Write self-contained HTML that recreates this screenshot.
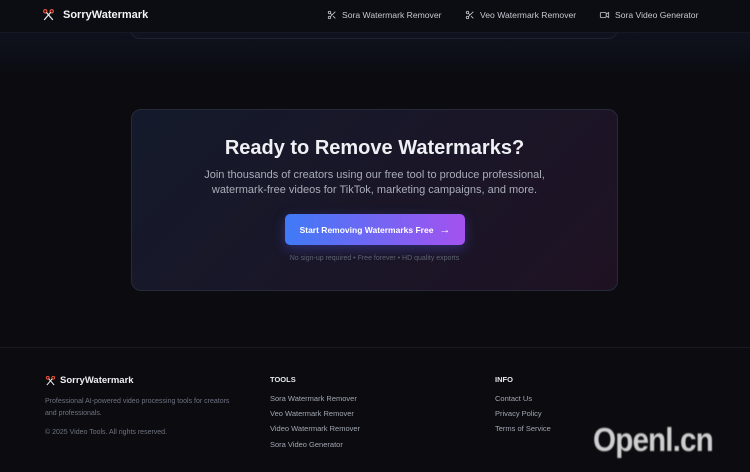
<!DOCTYPE html><html><head><meta charset="utf-8"><style>
*{margin:0;padding:0;box-sizing:border-box}
body{width:750px;height:472px;overflow:hidden;background:#0b0b10;font-family:"Liberation Sans",sans-serif;position:relative;color:#e5e7eb}
.top{position:absolute;left:0;top:0;width:750px;height:76px;background:linear-gradient(#121624,#0d0f18 70%,#0b0b10)}
.oldcard{position:absolute;left:130px;top:0;width:488px;height:39px;border:1px solid #1d2231;border-top:none;border-radius:0 0 10px 10px;background:#10131e}
header{position:absolute;left:0;top:0;width:750px;height:33px;background:#0c0d13;border-bottom:1px solid #161925}
.logo{position:absolute;left:42px;top:8px;font-weight:bold;font-size:11px;color:#f3f4f6;display:flex;align-items:center;gap:8px}
.nav{position:absolute;top:10px;font-size:8.6px;color:#c5c8d0;display:flex;align-items:center;gap:5px}
.cta{position:absolute;left:131px;top:109px;width:487px;height:182px;border:1px solid #262a3a;border-radius:10px;background:linear-gradient(135deg,#141a2b,#1a1628 55%,#1e1222)}
h2{position:absolute;top:27px;width:100%;text-align:center;font-size:20px;color:#eef0f4}
.p{position:absolute;top:58px;width:100%;text-align:center;font-size:11px;line-height:15px;color:#a9adb8}
.btn{position:absolute;left:153px;top:104px;width:180px;height:31px;border-radius:5px;background:linear-gradient(90deg,#3f7af6,#a452f0);color:#fff;font-weight:bold;font-size:8.5px;display:flex;align-items:center;justify-content:center;gap:6px;box-shadow:0 4px 12px rgba(90,90,240,.35)}
.small{position:absolute;top:145px;width:100%;text-align:center;font-size:7px;color:#5d6270}
.fline{position:absolute;left:0;top:347px;width:750px;border-top:1px solid #171a23}
.f{position:absolute;font-size:7.5px;color:#a3a7b2}
.fh{font-weight:bold;color:#e5e7eb;font-size:7.5px}
.wm{position:absolute;left:593px;top:421px;font-size:33px;font-weight:bold;color:#cfcfcf;filter:blur(.7px);letter-spacing:-1px;transform:scaleX(.9);transform-origin:left top}
</style></head><body>
<div class="top"></div><div class="oldcard"></div>
<header>
<div class="logo"><svg width="13" height="13" viewBox="0 0 24 24" fill="none" stroke="#e5533a" stroke-width="2.2"><circle cx="6" cy="6" r="3"/><circle cx="18" cy="6" r="3"/><path d="M8 8l12 14M16 8L4 22" stroke="#eee"/></svg>SorryWatermark</div>
<div class="nav" style="left:327px"><svg width="10" height="10" viewBox="0 0 24 24" fill="none" stroke="#c5c8d0" stroke-width="2"><circle cx="6" cy="6" r="3"/><circle cx="6" cy="18" r="3"/><path d="M20 4L8.1 15.9M14.5 14.5L20 20M8.1 8.1L12 12"/></svg>Sora Watermark Remover</div>
<div class="nav" style="left:465px"><svg width="10" height="10" viewBox="0 0 24 24" fill="none" stroke="#c5c8d0" stroke-width="2"><circle cx="6" cy="6" r="3"/><circle cx="6" cy="18" r="3"/><path d="M20 4L8.1 15.9M14.5 14.5L20 20M8.1 8.1L12 12"/></svg>Veo Watermark Remover</div>
<div class="nav" style="left:599px"><svg width="11" height="10" viewBox="0 0 24 24" fill="none" stroke="#c5c8d0" stroke-width="2"><rect x="2" y="6" width="14" height="12" rx="2"/><path d="M16 10l6-4v12l-6-4"/></svg>Sora Video Generator</div>
</header>
<div class="cta">
<h2>Ready to Remove Watermarks?</h2>
<div class="p">Join thousands of creators using our free tool to produce professional,<br>watermark-free videos for TikTok, marketing campaigns, and more.</div>
<div class="btn">Start Removing Watermarks Free <span style="font-size:11px">→</span></div>
<div class="small">No sign-up required • Free forever • HD quality exports</div>
</div>
<div class="fline"></div>
<div class="f" style="left:45px;top:375px;display:flex;align-items:center;gap:4px;font-size:9.5px;font-weight:bold;color:#eee"><svg width="11" height="11" viewBox="0 0 24 24" fill="none" stroke="#e5533a" stroke-width="2.2"><circle cx="6" cy="6" r="3"/><circle cx="18" cy="6" r="3"/><path d="M8 8l12 14M16 8L4 22" stroke="#eee"/></svg>SorryWatermark</div>
<div class="f" style="left:45px;top:396px;line-height:12px;color:#6f7380;font-size:7px">Professional AI-powered video processing tools for creators<br>and professionals.</div>
<div class="f" style="left:45px;top:429px;color:#6f7380;font-size:7px">© 2025 Video Tools. All rights reserved.</div>
<div class="f fh" style="left:270px;top:375px">TOOLS</div>
<div class="f" style="left:270px;top:391px;line-height:15.2px">Sora Watermark Remover<br>Veo Watermark Remover<br>Video Watermark Remover<br>Sora Video Generator</div>
<div class="f fh" style="left:495px;top:375px">INFO</div>
<div class="f" style="left:495px;top:391px;line-height:15.2px">Contact Us<br>Privacy Policy<br>Terms of Service</div>
<div class="wm">Openl.cn</div>
</body></html>
